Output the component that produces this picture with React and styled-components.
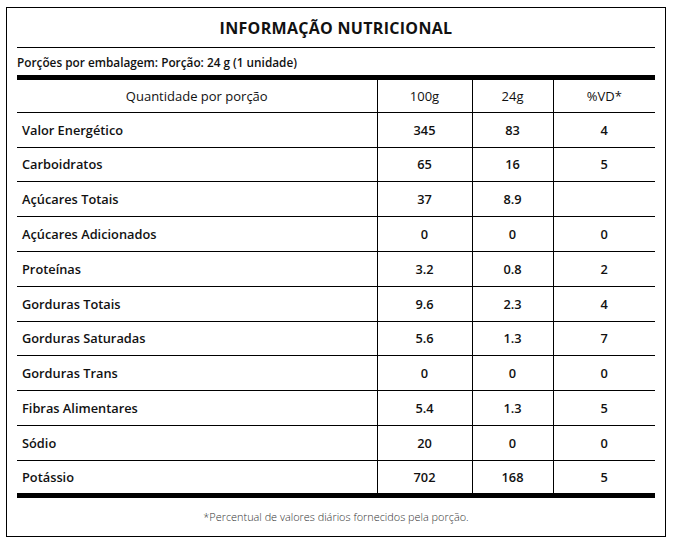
import React from "react"
import styled, { createGlobalStyle } from "styled-components"

const GlobalStyle = createGlobalStyle`
  body {
    margin: 0;
    background: #fff;
    font-family: "Open Sans", "Liberation Sans", sans-serif;
    color: #111;
  }
`

const Panel = styled.div`
  box-sizing: border-box;
  width: 660px;
  margin: 7px 0 0 6px;
  padding: 0 10px;
  border: 1px solid #000;
`

const Title = styled.h1`
  margin: 0;
  height: 38px;
  display: flex;
  align-items: center;
  justify-content: center;
  padding-top: 1px;
  font-size: 16px;
  font-weight: 700;
  letter-spacing: 0.3px;
  border-bottom: 1px solid #000;
`

const Serving = styled.div`
  height: 27px;
  display: flex;
  align-items: center;
  font-size: 11.8px;
  font-weight: 600;
`

const Table = styled.table`
  width: 100%;
  border-collapse: collapse;
  border-top: 5px solid #000;
  border-bottom: 5px solid #000;
`

const Cell = styled.td`
  height: 34.8px;
  padding: 0 5px;
  font-size: ${(p) => (p.$head ? 13 : 12.8)}px;
  font-weight: ${(p) => (p.$head ? 400 : 600)};
  text-align: ${(p) => (p.$left ? "left" : "center")};
  border-top: ${(p) => (p.$head ? "none" : "1px solid #000")};
  border-left: ${(p) => (p.$first ? "none" : "1px solid #000")};
  width: ${(p) => p.$w}px;
  box-sizing: border-box;
`

const Footnote = styled.div`
  height: 38px;
  display: flex;
  align-items: center;
  justify-content: center;
  font-size: 10.9px;
  font-weight: 300;
  color: #333;
`

const widths = [360, 95, 81, 102]

const rows = [
  ["Valor Energético", "345", "83", "4"],
  ["Carboidratos", "65", "16", "5"],
  ["Açúcares Totais", "37", "8.9", ""],
  ["Açúcares Adicionados", "0", "0", "0"],
  ["Proteínas", "3.2", "0.8", "2"],
  ["Gorduras Totais", "9.6", "2.3", "4"],
  ["Gorduras Saturadas", "5.6", "1.3", "7"],
  ["Gorduras Trans", "0", "0", "0"],
  ["Fibras Alimentares", "5.4", "1.3", "5"],
  ["Sódio", "20", "0", "0"],
  ["Potássio", "702", "168", "5"],
]

export default function App() {
  return (
    <>
      <GlobalStyle />
      <Panel>
        <Title>INFORMAÇÃO NUTRICIONAL</Title>
        <Serving>Porções por embalagem: Porção: 24 g (1 unidade)</Serving>
        <Table>
          <tbody>
            <tr>
              {["Quantidade por porção", "100g", "24g", "%VD*"].map((h, i) => (
                <Cell key={h} $head $first={i === 0} $w={widths[i]}>
                  {h}
                </Cell>
              ))}
            </tr>
            {rows.map((r) => (
              <tr key={r[0]}>
                {r.map((v, i) => (
                  <Cell key={i} $first={i === 0} $left={i === 0} $w={widths[i]}>
                    {v}
                  </Cell>
                ))}
              </tr>
            ))}
          </tbody>
        </Table>
        <Footnote>*Percentual de valores diários fornecidos pela porção.</Footnote>
      </Panel>
    </>
  )
}
